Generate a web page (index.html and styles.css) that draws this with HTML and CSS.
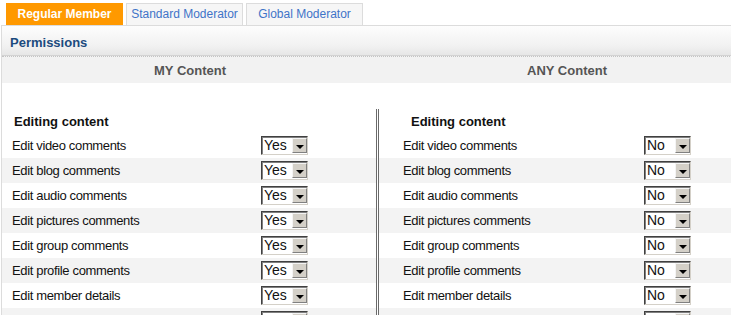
FILE: index.html
```html
<!DOCTYPE html>
<html lang="en">
<head>
    <meta charset="UTF-8">
    <title>Permissions</title>
    <link rel="stylesheet" href="styles.css">
</head>
<body>
    <div class="tabs">
        <span class="tab active">Regular Member</span>
        <span class="tab">Standard Moderator</span>
        <span class="tab">Global Moderator</span>
    </div>

    <div class="panel">
        <div class="panel-head">Permissions</div>
        <div class="cols-head">
            <div>MY Content</div>
            <div>ANY Content</div>
        </div>
        <div class="spacer"></div>

        <div class="cols">
            <div class="col col-my">
                <div class="section-title">Editing content</div>
                <div class="row"><span class="label">Edit video comments</span><span class="sel"><span class="val">Yes</span><span class="btn"></span></span></div>
                <div class="row alt"><span class="label">Edit blog comments</span><span class="sel"><span class="val">Yes</span><span class="btn"></span></span></div>
                <div class="row"><span class="label">Edit audio comments</span><span class="sel"><span class="val">Yes</span><span class="btn"></span></span></div>
                <div class="row alt"><span class="label">Edit pictures comments</span><span class="sel"><span class="val">Yes</span><span class="btn"></span></span></div>
                <div class="row"><span class="label">Edit group comments</span><span class="sel"><span class="val">Yes</span><span class="btn"></span></span></div>
                <div class="row alt"><span class="label">Edit profile comments</span><span class="sel"><span class="val">Yes</span><span class="btn"></span></span></div>
                <div class="row"><span class="label">Edit member details</span><span class="sel"><span class="val">Yes</span><span class="btn"></span></span></div>
                <!-- next row only peeks in at the bottom edge -->
                <div class="row alt"><span class="label"></span><span class="sel"><span class="val"></span><span class="btn"></span></span></div>
            </div>

            <div class="col col-any">
                <div class="section-title">Editing content</div>
                <div class="row"><span class="label">Edit video comments</span><span class="sel"><span class="val">No</span><span class="btn"></span></span></div>
                <div class="row alt"><span class="label">Edit blog comments</span><span class="sel"><span class="val">No</span><span class="btn"></span></span></div>
                <div class="row"><span class="label">Edit audio comments</span><span class="sel"><span class="val">No</span><span class="btn"></span></span></div>
                <div class="row alt"><span class="label">Edit pictures comments</span><span class="sel"><span class="val">No</span><span class="btn"></span></span></div>
                <div class="row"><span class="label">Edit group comments</span><span class="sel"><span class="val">No</span><span class="btn"></span></span></div>
                <div class="row alt"><span class="label">Edit profile comments</span><span class="sel"><span class="val">No</span><span class="btn"></span></span></div>
                <div class="row"><span class="label">Edit member details</span><span class="sel"><span class="val">No</span><span class="btn"></span></span></div>
                <div class="row alt"><span class="label"></span><span class="sel"><span class="val"></span><span class="btn"></span></span></div>
            </div>
        </div>
    </div>
</body>
</html>
```

FILE: styles.css
```css
:root {
    --orange: #ff9900;
    --tab-blue: #3f74c8;
    --head-blue: #1c4b7e;
    --row-alt: #f3f3f3;
    --line: #dcdcdc;
    --divider: #6a6a6a;
}

* {
    box-sizing: border-box;
}

body {
    margin: 0;
    width: 760px;
    height: 315px;
    overflow: hidden;
    background: #fff;
    color: #111;
    font-family: "Liberation Sans", Arial, sans-serif;
    font-size: 13px;
}

/* tabs */
.tabs {
    display: flex;
    gap: 3px;
    padding: 3px 0 0 6px;
}

.tab {
    width: 117px;
    height: 22px;
    line-height: 20px;
    text-align: center;
    font-size: 12px;
    color: var(--tab-blue);
    background: #f6f6f6;
    border: 1px solid var(--line);
    border-bottom: none;
}

.tab.active {
    background: var(--orange);
    border-color: var(--orange);
    color: #fff;
    font-weight: bold;
}

/* panel */
.panel {
    margin-left: 1px;
    border-top: 1px solid var(--line);
    border-left: 1px solid var(--line);
}

.panel-head {
    height: 30px;
    line-height: 33px;
    padding-left: 8px;
    font-weight: bold;
    color: var(--head-blue);
    background: linear-gradient(#fdfdfd, #f1f1f1 70%, #e6e6e6);
    border-bottom: 1px solid #d2d2d2;
}

.cols-head {
    display: grid;
    grid-template-columns: 376px 378px;
    height: 27px;
    line-height: 27px;
    background: #f2f2f2;
    border-top: 1px dotted #c4c4c4;
    color: #555;
    font-weight: bold;
    text-align: center;
}

.spacer {
    height: 26px;
}

/* columns */
.cols {
    display: grid;
    grid-template-columns: 374px 385px;
}

.col-any {
    border-left: 3px double var(--divider);
}

.section-title {
    height: 24px;
    line-height: 25px;
    font-weight: bold;
    padding-left: 12px;
}

.col-any .section-title {
    padding-left: 32px;
}

.row {
    display: flex;
    align-items: center;
    height: 25px;
    padding-left: 10px;
}

.col-any .row {
    padding-left: 24px;
}

.row.alt {
    background: var(--row-alt);
}

.label {
    width: 249px;
    letter-spacing: -0.35px;
}

.col-any .label {
    width: 241px;
}

/* classic drop-down */
.sel {
    display: flex;
    width: 47px;
    height: 19px;
    background: #fff;
    border: 1px solid;
    border-color: #404040 #d4d0c8 #d4d0c8 #404040;
    box-shadow: inset 1px 1px 0 #808080;
}

.val {
    flex: 1;
    padding: 1px 0 0 2px;
    font-size: 14px;
    line-height: 15px;
}

.btn {
    position: relative;
    width: 15px;
    margin: 1px 0 1px;
    background: #d4d0c8;
    border: 1px solid;
    border-color: #f4f4f4 #808080 #808080 #f4f4f4;
}

.btn::after {
    content: "";
    position: absolute;
    left: 3px;
    top: 6px;
    border-left: 4px solid transparent;
    border-right: 4px solid transparent;
    border-top: 4px solid #000;
}
```
